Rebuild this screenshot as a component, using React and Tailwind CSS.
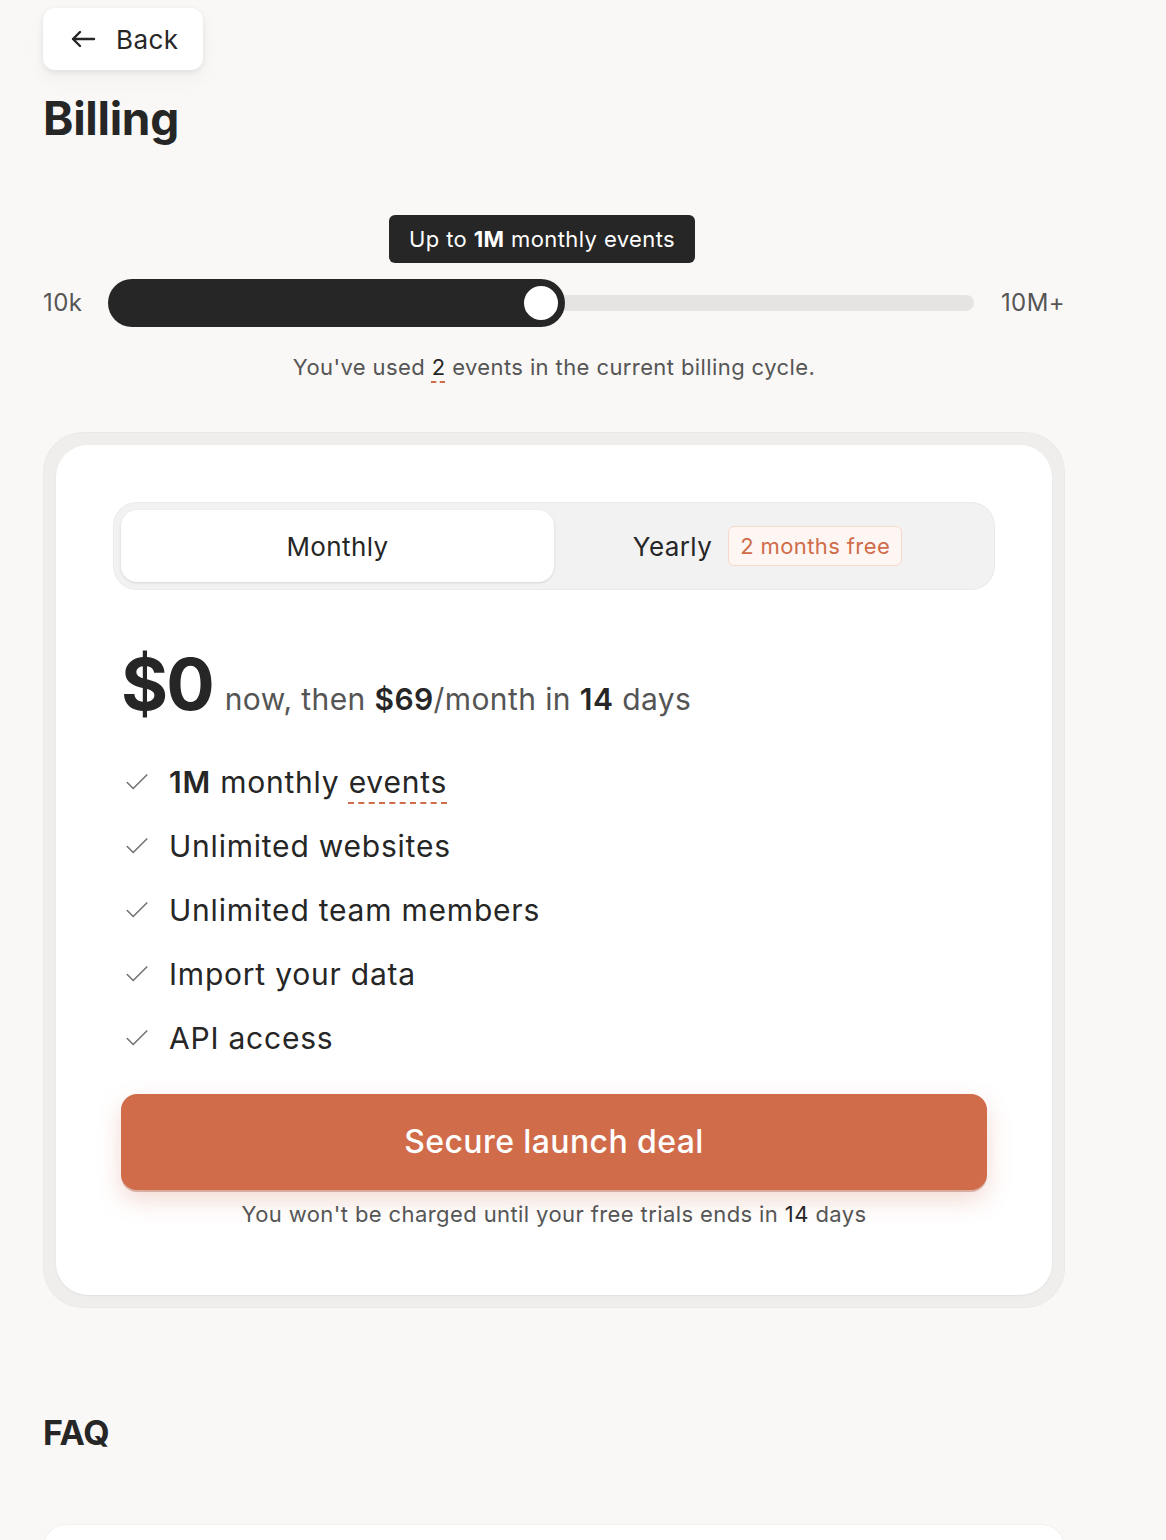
import React from "react";

const font = { fontFamily: "Inter, 'Noto Sans', sans-serif" };

function Check() {
  return (
    <svg width="26" height="26" viewBox="0 0 24 24" fill="none" stroke="#737373" strokeWidth="1.5" strokeLinecap="round" strokeLinejoin="round">
      <path d="M3 12.5 L8.5 18 L21 5.5" />
    </svg>
  );
}

function Feature({ children }) {
  return (
    <div className="flex items-center h-[64px]">
      <div className="w-[48px] pl-[3px] flex items-center"><Check /></div>
      <div className="text-[30px] text-[#262626] tracking-[0.026em]">{children}</div>
    </div>
  );
}

export default function App() {
  return (
    <div className="min-h-[1540px] bg-[#f9f8f6] text-[#262626] tracking-[0.025em]" style={font}>
      <div className="pl-[43px] w-[1065px]">
        <div className="pt-[8px]">
          <button className="flex items-center gap-[20px] h-[62px] w-[160px] pl-[27px] bg-white rounded-[12px] shadow-[0_2px_6px_rgba(0,0,0,0.08),0_8px_20px_rgba(0,0,0,0.04)] text-[26px] text-[#262626]">
            <svg width="26" height="20" viewBox="0 0 26 20" fill="none" stroke="#262626" strokeWidth="2.4" strokeLinecap="round" strokeLinejoin="round">
              <path d="M24 10 H3 M10 3 L3 10 L10 17" />
            </svg>
            <span>Back</span>
          </button>
        </div>
        <h1 className="mt-[18px] text-[46px] font-bold leading-[60px] tracking-[-0.3px]">Billing</h1>

        {/* slider */}
        <div className="mt-[67px] flex justify-center w-[1022px]">
          <div className="h-[48px] px-[20px] flex items-center bg-[#262626] text-white text-[22px] rounded-[6px]" style={{ marginLeft: -24 }}>
            Up to&nbsp;<b className="font-bold">1M</b>&nbsp;monthly events
          </div>
        </div>
        <div className="mt-[16px] flex items-center h-[48px] w-[1022px]">
          <div className="w-[65px] text-[24px] text-[#555]">10k</div>
          <div className="relative flex-1 h-[48px] flex items-center">
            <div className="absolute left-0 right-[0px] h-[16px] rounded-full bg-[#e5e4e2]" />
            <div className="absolute left-0 top-0 w-[457px] h-[48px] rounded-full bg-[#262626]" />
            <div className="absolute left-[412px] top-[3px] w-[42px] h-[42px] rounded-full bg-white border-[4px] border-[#262626]" />
          </div>
          <div className="w-[91px] text-right text-[24px] text-[#555]">10M+</div>
        </div>
        <div className="mt-[24px] w-[1022px] text-center text-[22px] text-[#555]">
          You've used{" "}
          <span className="text-[#262626] underline decoration-dashed decoration-[#d06c4a] underline-offset-[6px] decoration-[1.5px]">2</span>{" "}
          events in the current billing cycle.
        </div>

        {/* card */}
        <div className="mt-[48px] w-[1022px] bg-[#efeeec] rounded-[40px] p-[13px] shadow-[inset_0_0_0_1px_rgba(0,0,0,0.02)]">
          <div className="bg-white rounded-[32px] px-[57px] pt-[57px] pb-[64px] shadow-[0_1px_2px_rgba(0,0,0,0.06)]">
            <div className="h-[88px] bg-[#f2f2f2] rounded-[24px] p-[8px] flex shadow-[inset_0_0_0_1px_rgba(0,0,0,0.03)]">
              <div className="w-[433px] h-[72px] bg-white rounded-[16px] shadow-[0_1px_3px_rgba(0,0,0,0.12)] flex items-center justify-center text-[26px] text-[#262626]">
                Monthly
              </div>
              <div className="flex-1 flex items-center justify-center gap-[16px] pr-[6px]">
                <span className="text-[26px] text-[#262626]">Yearly</span>
                <span className="h-[40px] px-[11px] flex items-center rounded-[6px] border border-[#f6d9cd] bg-[#fdf6f3] text-[22px] text-[#d06c4a]">2 months free</span>
              </div>
            </div>

            <div className="px-[8px]">
              <div className="mt-[54px] flex items-baseline">
                <span className="text-[72px] font-bold leading-[80px] tracking-[-2px]">$0</span>
                <span className="ml-[12px] text-[30px] text-[#555]">
                  now, then <b className="text-[#262626] font-semibold">$69</b>/month in <b className="text-[#262626] font-semibold">14</b> days
                </span>
              </div>

              <div className="mt-[26px]">
                <Feature>
                  <b className="font-semibold">1M</b> monthly{" "}
                  <span className="underline decoration-dashed decoration-[#d06c4a] decoration-[2px] underline-offset-[10px]">events</span>
                </Feature>
                <Feature>Unlimited websites</Feature>
                <Feature>Unlimited team members</Feature>
                <Feature>Import your data</Feature>
                <Feature>API access</Feature>
              </div>

              <button className="mt-[24px] w-full h-[96px] rounded-[16px] bg-[#d06c4a] text-white text-[32px] font-medium shadow-[0_2px_0_rgba(160,70,40,0.35),0_10px_24px_rgba(208,108,74,0.25)]">
                Secure launch deal
              </button>
              <div className="mt-[8px] text-center text-[22px] text-[#555]">
                You won't be charged until your free trials ends in <span className="text-[#262626]">14</span> days
              </div>
            </div>
          </div>
        </div>

        <h2 className="mt-[99px] text-[34px] font-bold tracking-[-0.3px]">FAQ</h2>
        <div className="mt-[67px] w-[1022px] h-[40px] bg-white rounded-t-[24px] shadow-[0_0_0_1px_rgba(0,0,0,0.03)]" />
      </div>
    </div>
  );
}
